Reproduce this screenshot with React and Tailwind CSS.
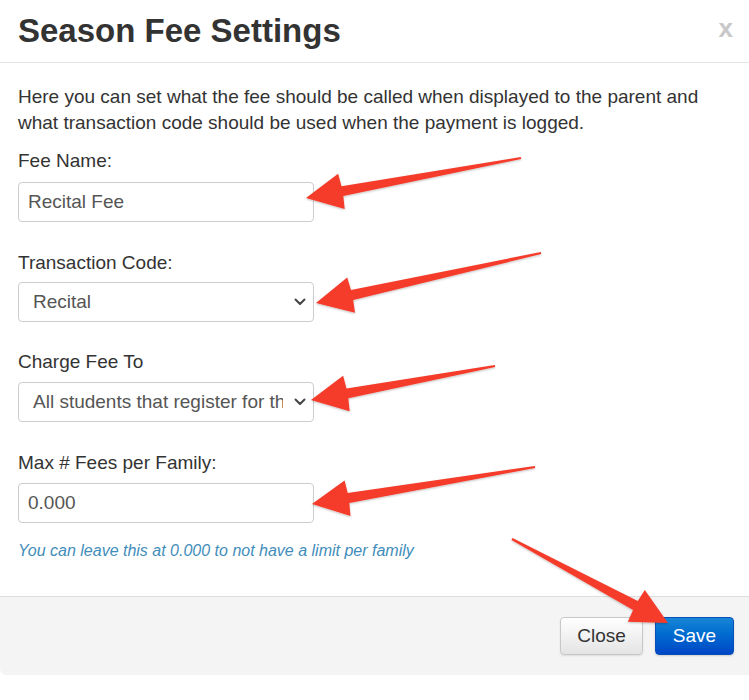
import React from "react";

function arrowPoints(tip, tail) {
  const [tx, ty] = tip;
  const [ax, ay] = tail;
  const dx = ax - tx;
  const dy = ay - ty;
  const L = Math.hypot(dx, dy);
  const ux = dx / L;
  const uy = dy / L;
  const nx = -uy;
  const ny = ux;
  const H = 36;
  const W = 18;
  const NW = 5;
  const NH = 37;
  const p = (d, s) => [tx + ux * d + nx * s, ty + uy * d + ny * s];
  const pts = [
    [tx, ty],
    p(H, W),
    p(NH, NW),
    [ax + nx * 1, ay + ny * 1],
    [ax - nx * 1, ay - ny * 1],
    p(NH, -NW),
    p(H, -W),
  ];
  return pts.map((q) => q[0].toFixed(1) + "," + q[1].toFixed(1)).join(" ");
}

const arrows = [
  [[306, 198], [521, 158]],
  [[316, 303], [541, 253]],
  [[311, 400], [495, 366]],
  [[312, 504], [535, 467]],
  [[668, 623], [512, 539]],
];

function Chevron() {
  return (
    <svg width="12" height="8" viewBox="0 0 12 8" className="shrink-0">
      <path d="M1.5 1.5 L6 6 L10.5 1.5" fill="none" stroke="#444" strokeWidth="2" strokeLinecap="round" strokeLinejoin="round" />
    </svg>
  );
}

function Label({ children, className }) {
  return <div className={"text-[19px] leading-[26px] text-[#333] " + className}>{children}</div>;
}

export default function App() {
  return (
    <div className="relative h-[700px] w-[749px] overflow-hidden bg-white font-['Liberation_Sans',Arial,sans-serif] text-[#333]">
      <div className="flex h-[63px] items-center justify-between border-b border-[#e5e5e5] pl-[18px] pr-[16px]">
        <h1 className="text-[33px] font-bold leading-[36px] text-[#333]">Season Fee Settings</h1>
        <span className="mb-[6px] text-[26px] font-bold leading-none text-[#c8c8c8]">x</span>
      </div>

      <div className="h-[533px] px-[18px] pt-[21px]">
        <p className="text-[19px] leading-[26px] text-[#333]">
          Here you can set what the fee should be called when displayed to the parent and
          <br />
          what transaction code should be used when the payment is logged.
        </p>

        <Label className="mt-[12px] mb-[8px]">Fee Name:</Label>
        <div className="flex h-[40px] w-[296px] items-center rounded-[4px] border border-[#ccc] pl-[9px] text-[19px] text-[#555]">
          Recital Fee
        </div>

        <Label className="mt-[28px] mb-[6px]">Transaction Code:</Label>
        <div className="flex h-[40px] w-[296px] items-center rounded-[4px] border border-[#ccc] pl-[14px] pr-[7px] text-[19px] text-[#555]">
          <div className="flex-1 overflow-hidden whitespace-nowrap">Recital</div>
          <Chevron />
        </div>

        <Label className="mt-[27px] mb-[7px]">Charge Fee To</Label>
        <div className="flex h-[40px] w-[296px] items-center rounded-[4px] border border-[#ccc] pl-[14px] pr-[7px] text-[19px] text-[#555]">
          <div className="w-[250px] overflow-hidden whitespace-nowrap">All students that register for the season</div>
          <div className="flex-1" />
          <Chevron />
        </div>

        <Label className="mt-[28px] mb-[7px]">Max # Fees per Family:</Label>
        <div className="flex h-[40px] w-[296px] items-center rounded-[4px] border border-[#ccc] pl-[9px] text-[19px] text-[#555]">
          0.000
        </div>

        <p className="mt-[18px] text-[16px] italic leading-[20px] text-[#3f8dba]">
          You can leave this at 0.000 to not have a limit per family
        </p>
      </div>

      <div className="flex h-[79px] items-center justify-end gap-[12px] rounded-bl-[6px] border-t border-[#dddddd] bg-[#f4f4f4] pr-[15px]">
        <button className="h-[38px] w-[83px] rounded-[4px] border border-[#c8c8c8] bg-linear-to-b from-white to-[#e4e4e4] text-[19px] text-[#333] shadow-[0_1px_2px_rgba(0,0,0,0.1)]">
          Close
        </button>
        <button className="h-[38px] w-[79px] rounded-[4px] border border-[#0a4fb8] bg-linear-to-b from-[#1786d6] to-[#0046c6] text-[19px] text-white shadow-[0_1px_2px_rgba(0,0,0,0.15)]">
          Save
        </button>
      </div>

      <svg className="pointer-events-none absolute left-0 top-0" width="749" height="700" viewBox="0 0 749 700">
        <defs>
          <filter id="sh" x="-20%" y="-20%" width="140%" height="140%">
            <feDropShadow dx="0" dy="1" stdDeviation="1.2" floodColor="#000" floodOpacity="0.25" />
          </filter>
        </defs>
        {arrows.map((a, i) => (
          <polygon key={i} points={arrowPoints(a[0], a[1])} fill="#f53b2a" filter="url(#sh)" />
        ))}
      </svg>
    </div>
  );
}
